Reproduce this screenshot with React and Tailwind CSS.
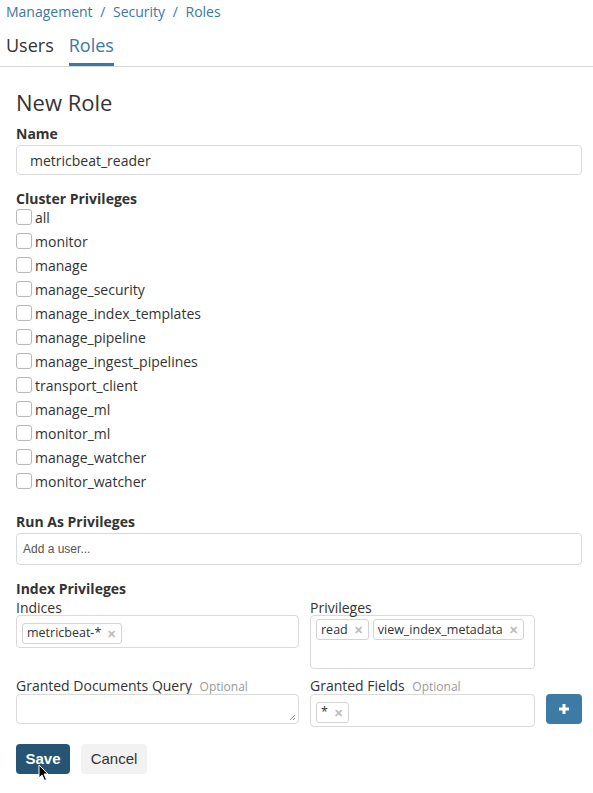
import React from 'react';

const privileges = [
  'all',
  'monitor',
  'manage',
  'manage_security',
  'manage_index_templates',
  'manage_pipeline',
  'manage_ingest_pipelines',
  'transport_client',
  'manage_ml',
  'monitor_ml',
  'manage_watcher',
  'monitor_watcher',
];

function Tag({ label }) {
  return (
    <span className="inline-flex items-center h-[21px] pl-[4px] pr-[5px] border border-[#d4d4d4] rounded-[3px] bg-white text-[12.5px] leading-[18px] text-[#333]">
      {label}
      <span className="ml-[6px] text-[#bcbcbc] text-[11px] font-bold leading-none">✕</span>
    </span>
  );
}

export default function App() {
  return (
    <div className="w-[593px] h-[793px] bg-white text-[#333] overflow-hidden" style={{ fontFamily: '"Open Sans", sans-serif' }}>
      {/* Breadcrumb */}
      <div className="px-[6px] pt-[2px] text-[14px] leading-[20px] text-[#3c78a6]">
        Management <span className="mx-[4px]">/</span> Security <span className="mx-[4px]">/</span> Roles
      </div>

      {/* Tabs */}
      <div className="flex gap-[15px] px-[6px] border-b border-[#d6d6d6]">
        <div className="pt-[11px] pb-[6px] border-b-[3px] border-transparent text-[18px] leading-[24px] text-[#333]">Users</div>
        <div className="pt-[11px] pb-[6px] border-b-[3px] border-[#3c78a6] text-[18px] leading-[24px] text-[#3c78a6]">Roles</div>
      </div>

      <div className="pl-[16px] pr-[11px]">
        <h1 className="pt-[21px] text-[22px] leading-[28px] text-[#333]">New Role</h1>

        <div className="mt-[8px] text-[14px] leading-[20px] font-bold">Name</div>
        <div className="mt-[1px] h-[30px] border border-[#dadada] rounded-[4px] flex items-center px-[13px] text-[14px]">
          metricbeat_reader
        </div>

        <div className="mt-[12px] text-[14px] leading-[24px] font-bold">Cluster Privileges</div>
        <div className="-mt-[4px] flex flex-col gap-[4px]">
          {privileges.map((p) => (
            <label key={p} className="flex items-center h-[20px] text-[14px]">
              <span className="w-[16px] h-[16px] border border-[#b9b9b9] rounded-[3px] bg-white mr-[3px]"></span>
              {p}
            </label>
          ))}
        </div>

        <div className="mt-[21px] text-[14px] leading-[20px] font-bold">Run As Privileges</div>
        <div
          className="mt-[1px] h-[32px] border border-[#dadada] rounded-[4px] flex items-center px-[6px] text-[12px] text-[#555]"
          style={{ fontFamily: '"Liberation Sans", Arial, sans-serif' }}
        >
          Add a user...
        </div>

        <div className="mt-[15px] text-[14px] leading-[18px] font-bold">Index Privileges</div>

        <div className="grid grid-cols-[283px_1fr] gap-x-[11px] mt-[2px]">
          <div>
            <div className="text-[14px] leading-[15px]">Indices</div>
            <div className="h-[33px] border border-[#dadada] rounded-[4px] pl-[5px] pt-[3px]">
              <Tag label="metricbeat-*" />
            </div>
          </div>
          <div>
            <div className="text-[14px] leading-[15px]">Privileges</div>
            <div className="w-[225px] h-[54px] border border-[#dadada] rounded-[4px] pl-[5px] pt-[3px] flex items-start gap-[4px]">
              <Tag label="read" />
              <Tag label="view_index_metadata" />
            </div>
          </div>

          <div className="mt-[10px]">
            <div className="text-[14px] leading-[14px]">
              Granted Documents Query <span className="ml-[4px] text-[12px] text-[#999]">Optional</span>
            </div>
            <div className="relative h-[30px] border border-[#dadada] rounded-[4px]">
              <svg className="absolute right-[2px] bottom-[2px]" width="7" height="7" viewBox="0 0 7 7">
                <path d="M6 1 L1 6 M6 4 L4 6" stroke="#888" strokeWidth="1" />
              </svg>
            </div>
          </div>
          <div className="mt-[10px]">
            <div className="text-[14px] leading-[14px]">
              Granted Fields <span className="ml-[4px] text-[12px] text-[#999]">Optional</span>
            </div>
            <div className="flex items-start gap-[11px]">
              <div className="w-[225px] h-[33px] border border-[#dadada] rounded-[4px] pl-[5px] pt-[3px]">
                <Tag label="*" />
              </div>
              <button className="w-[36px] h-[30px] rounded-[4px] bg-[#3d7aa5] flex items-center justify-center">
                <svg width="12" height="12" viewBox="0 0 12 12">
                  <path d="M6 1 V11 M1 6 H11" stroke="#fff" strokeWidth="3" />
                </svg>
              </button>
            </div>
          </div>
        </div>

        <div className="mt-[17px] flex gap-[11px]" style={{ fontFamily: '"Liberation Sans", Arial, sans-serif' }}>
          <button className="relative w-[54px] h-[30px] rounded-[4px] bg-[#255474] text-white text-[15px] font-bold">
            Save
            <svg className="absolute left-[22px] top-[20px]" width="12" height="18" viewBox="0 0 12 18">
              <path d="M1 1 L1 14 L4 11 L6.5 16.5 L8.5 15.5 L6 10 L10 10 Z" fill="#000" stroke="#fff" strokeWidth="1" />
            </svg>
          </button>
          <button className="w-[66px] h-[30px] rounded-[4px] bg-[#f2f2f2] text-[#333] text-[15px]">
            Cancel
          </button>
        </div>
      </div>
    </div>
  );
}
